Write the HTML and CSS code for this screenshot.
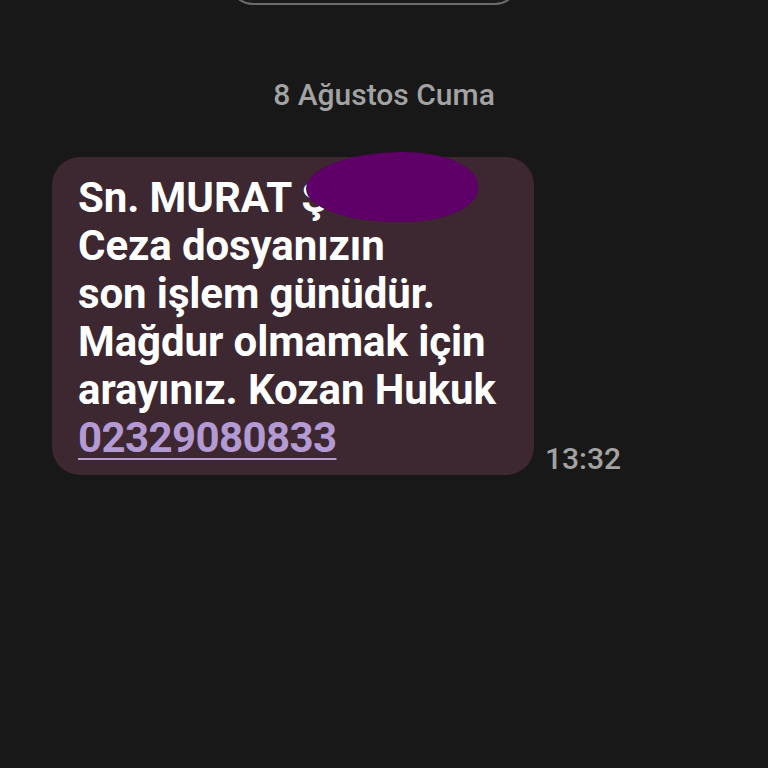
FILE: index.html
```html
<!DOCTYPE html>
<html lang="tr">
<head>
<meta charset="utf-8">
<link rel="stylesheet" href="styles.css">
</head>
<body>
<div class="top-pill"></div>
<div class="date">8 Ağustos Cuma</div>
<div class="row">
  <div class="bubble">
    <div class="text">Sn. MURAT Ş<br>Ceza dosyanızın<br>son işlem günüdür.<br>Mağdur olmamak için<br>arayınız. Kozan Hukuk<br><span class="link">02329080833</span></div>
    <div class="redact"></div>
  </div>
  <div class="time">13:32</div>
</div>
</body>
</html>
```
FILE: styles.css
```css
html, body {
  margin: 0;
  padding: 0;
  background: #181818;
  width: 768px;
  height: 768px;
  overflow: hidden;
  font-family: Roboto, "Noto Sans", sans-serif;
}
.top-pill {
  width: 286px;
  height: 44px;
  margin: -43px 0 0 229px;
  border: 2px solid #6b6b6b;
  border-radius: 26px;
  background: #1c1a1b;
}
.date {
  margin-top: 72px;
  text-align: center;
  color: #a3a3a3;
  font-size: 30px;
  font-weight: 500;
  line-height: 36px;
}
.row {
  display: flex;
  align-items: flex-end;
  margin: 44px 0 0 52px;
}
.bubble {
  position: relative;
  width: 482px;
  box-sizing: border-box;
  padding: 17px 20px 13px 26px;
  background: #3d2730;
  border-radius: 28px;
}
.text {
  color: #ffffff;
  font-size: 42px;
  font-weight: 700;
  line-height: 48px;
  letter-spacing: -0.1px;
  white-space: nowrap;
}
.link {
  color: #b49ad3;
  letter-spacing: -0.6px;
  text-decoration: underline;
  text-decoration-thickness: 2px;
  text-underline-offset: 6px;
}
.redact {
  position: absolute;
  left: 254px;
  top: -5px;
  width: 172px;
  height: 70px;
  background: #5f0068;
  border-radius: 60% 45% 45% 55% / 55% 50% 50% 50%;
}
.time {
  margin: 0 0 0 11px;
  color: #a3a3a3;
  font-size: 30px;
  font-weight: 500;
  line-height: 32px;
}
```
